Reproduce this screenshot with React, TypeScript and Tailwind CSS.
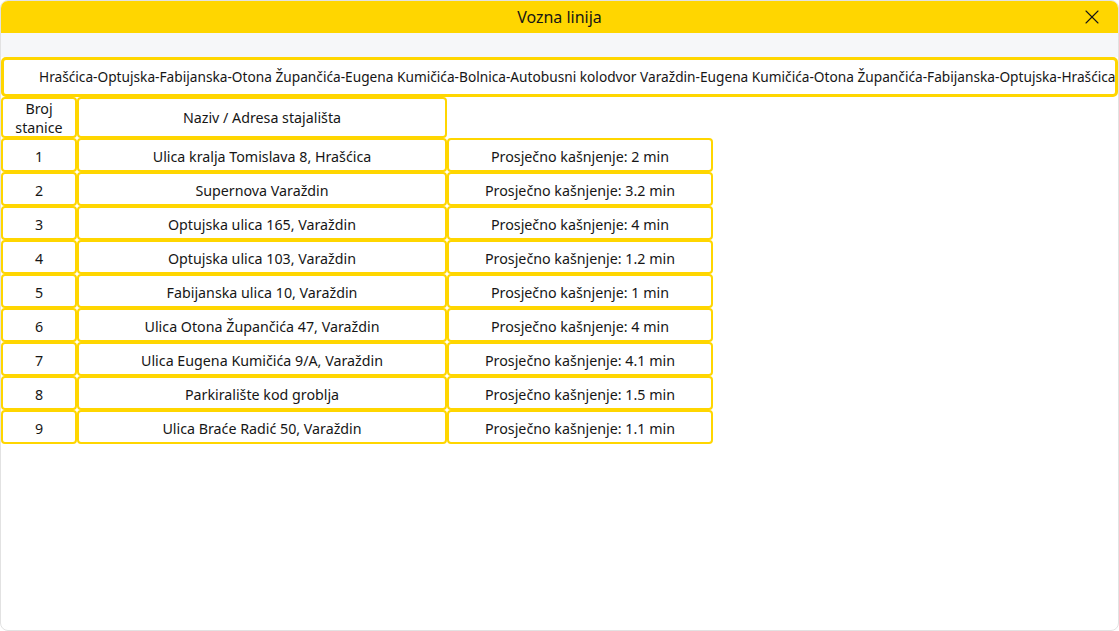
import React from "react";
import { X } from "lucide-react";

const stops = [
  { no: 1, name: "Ulica kralja Tomislava 8, Hrašćica", delay: "2" },
  { no: 2, name: "Supernova Varaždin", delay: "3.2" },
  { no: 3, name: "Optujska ulica 165, Varaždin", delay: "4" },
  { no: 4, name: "Optujska ulica 103, Varaždin", delay: "1.2" },
  { no: 5, name: "Fabijanska ulica 10, Varaždin", delay: "1" },
  { no: 6, name: "Ulica Otona Župančića 47, Varaždin", delay: "4" },
  { no: 7, name: "Ulica Eugena Kumičića 9/A, Varaždin", delay: "4.1" },
  { no: 8, name: "Parkiralište kod groblja", delay: "1.5" },
  { no: 9, name: "Ulica Braće Radić 50, Varaždin", delay: "1.1" },
];

const route =
  "Hrašćica-Optujska-Fabijanska-Otona Župančića-Eugena Kumičića-Bolnica-Autobusni kolodvor Varaždin-Eugena Kumičića-Otona Župančića-Fabijanska-Optujska-Hrašćica";

const cell =
  "flex items-center justify-center border-2 border-[#ffd600] rounded-[4px] bg-white text-center";

const App = (): JSX.Element => {
  return (
    <div
      className="w-[1119px] h-[631px] overflow-hidden bg-white text-[#161616]"
      style={{ fontFamily: '"Noto Sans", sans-serif' }}
    >
      <div className="h-full flex flex-col rounded-[8px] border border-[#e2e2e2] overflow-hidden">
        <div className="relative h-[32px] shrink-0 bg-[#ffd600] flex items-center justify-center">
          <span className="text-[16px]">Vozna linija</span>
          <X className="absolute right-[14px] top-[4px] w-[24px] h-[24px]" strokeWidth={1.1} />
        </div>
        <div className="h-[24px] shrink-0 bg-[#f6f7f9]" />
        <div className="flex flex-col">
          <div className="h-[40px] w-[1117px] flex items-center pl-[35px] border-[3px] border-[#ffd600] rounded-[5px] text-[13.7px] whitespace-nowrap overflow-hidden">
            {route}
          </div>
          <div className="grid grid-cols-[76px_370px_266px] text-[14.25px]">
            <div className={`${cell} h-[41px] leading-[19px]`}>
              Broj
              <br />
              stanice
            </div>
            <div className={`${cell} h-[41px]`}>Naziv / Adresa stajališta</div>
            <div />
            {stops.map((stop) => (
              <React.Fragment key={stop.no}>
                <div className={`${cell} h-[34px] pt-[3px]`}>{stop.no}</div>
                <div className={`${cell} h-[34px] pt-[3px]`}>{stop.name}</div>
                <div className={`${cell} h-[34px] pt-[3px]`}>
                  Prosječno kašnjenje: {stop.delay} min
                </div>
              </React.Fragment>
            ))}
          </div>
        </div>
      </div>
    </div>
  );
};

export default App;
